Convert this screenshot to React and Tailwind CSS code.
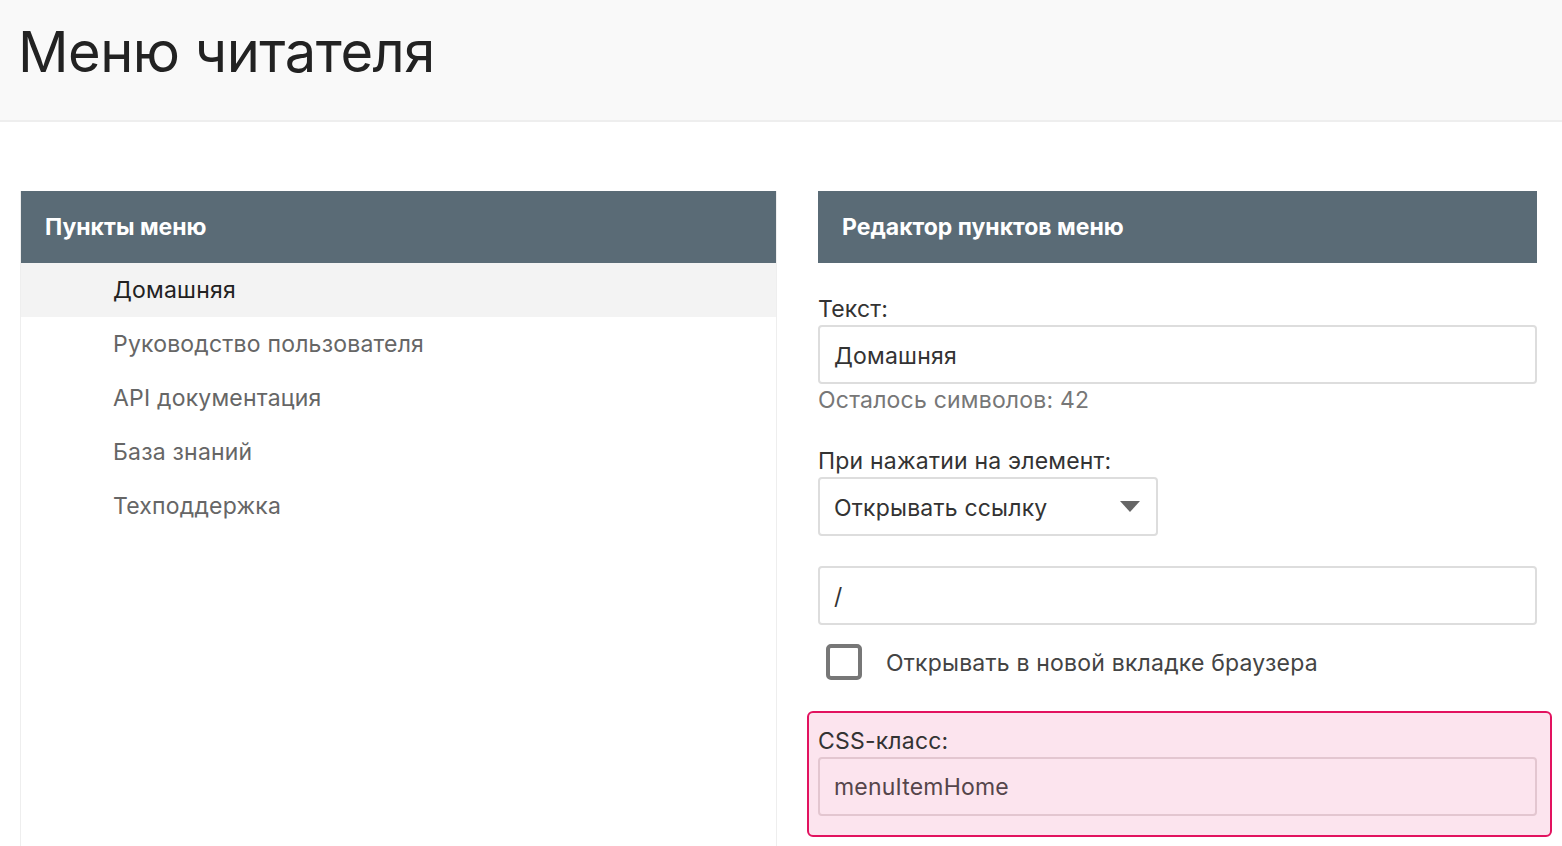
import { useState } from "react";

const menuItems = [
  "Домашняя",
  "Руководство пользователя",
  "API документация",
  "База знаний",
  "Техподдержка",
];

function PanelHeader({ title }) {
  return (
    <div className="h-[72px] bg-[#5a6b76] flex items-center px-6">
      <h2 className="text-[23px] font-bold text-white">{title}</h2>
    </div>
  );
}

function Label({ children, className = "" }) {
  return <div className={"h-[28px] leading-[28px] mb-[2px] text-[23px] tracking-[0.2px] text-[#333] " + className}>{children}</div>;
}

function TextInput({ value, className = "" }) {
  return (
    <div
      className={
        "h-[59px] border-2 border-[#dddddd] rounded-[4px] flex items-center px-[14px] pt-[3px] text-[23px] tracking-[0.2px] text-[#333] " + className
      }
    >
      {value}
    </div>
  );
}

export default function App() {
  const [selected, setSelected] = useState(0);
  const [newTab, setNewTab] = useState(false);

  return (
    <div className="min-h-screen flex flex-col bg-white font-['Inter',sans-serif]">
      <header className="h-[122px] shrink-0 bg-[#f9f9f9] border-b-2 border-[#eeeeee] flex items-center px-5">
        <h1 className="text-[56px] leading-none text-[#222] tracking-[-0.5px] -mt-[16px] -ml-[2px]">Меню читателя</h1>
      </header>

      <main className="flex-1 grid grid-cols-[757px_1fr] gap-[41px] pl-5 pr-[25px] pt-[69px]">
        {/* left column */}
        <section className="border-x border-[#eeeeee] flex flex-col">
          <PanelHeader title="Пункты меню" />
          <ul>
            {menuItems.map((item, i) => (
              <li
                key={item}
                onClick={() => setSelected(i)}
                className={
                  "h-[54px] flex items-center pl-[92px] text-[23px] tracking-[0.2px] cursor-pointer " +
                  (selected === i ? "bg-[#f3f3f3] text-[#222]" : "text-[#666]")
                }
              >
                {item}
              </li>
            ))}
          </ul>
        </section>

        {/* right column */}
        <section className="flex flex-col">
          <PanelHeader title="Редактор пунктов меню" />

          <div className="pt-[32px]">
            <Label>Текст:</Label>
            <TextInput value={menuItems[selected]} />
            <div className="h-[28px] leading-[28px] mt-[2px] text-[23px] tracking-[0.2px] text-[#777]">Осталось символов: 42</div>

            <Label className="mt-[33px]">При нажатии на элемент:</Label>
            <div className="w-[340px] h-[59px] border-2 border-[#dddddd] rounded-[4px] flex items-center justify-between pl-[14px] pr-[14px] pt-[3px] text-[23px] tracking-[0.2px] text-[#333]">
              <span>Открывать ссылку</span>
              <svg width="20" height="11" viewBox="0 0 20 11" className="mr-[2px] -mt-[3px]">
                <path d="M0 0 L20 0 L10 11 Z" fill="#666" />
              </svg>
            </div>

            <TextInput value="/" className="mt-[30px]" />

            <label className="mt-[19px] flex items-center gap-[24px] pl-[8px] cursor-pointer">
              <span
                onClick={() => setNewTab(!newTab)}
                className="w-[36px] h-[36px] rounded-[5px] border-4 border-[#777] flex items-center justify-center"
              >
                {newTab && <span className="w-[16px] h-[16px] bg-[#777] rounded-sm" />}
              </span>
              <span className="text-[23px] tracking-[0.2px] text-[#444] pt-[2px]">Открывать в новой вкладке браузера</span>
            </label>

            <div className="mt-[30px] -ml-[11px] -mr-[15px] border-2 border-[#e2125f] rounded-[6px] bg-[#fce4ee] pt-[14px] pb-[19px] pl-[9px] pr-[13px]">
              <Label className="text-[#3d3036]">CSS-класс:</Label>
              <div className="h-[59px] border-2 border-[#e3c6d0] rounded-[4px] flex items-center px-[14px] pt-[3px] text-[23px] tracking-[0.2px] text-[#55454b]">
                menuItemHome
              </div>
            </div>
          </div>
        </section>
      </main>
    </div>
  );
}
